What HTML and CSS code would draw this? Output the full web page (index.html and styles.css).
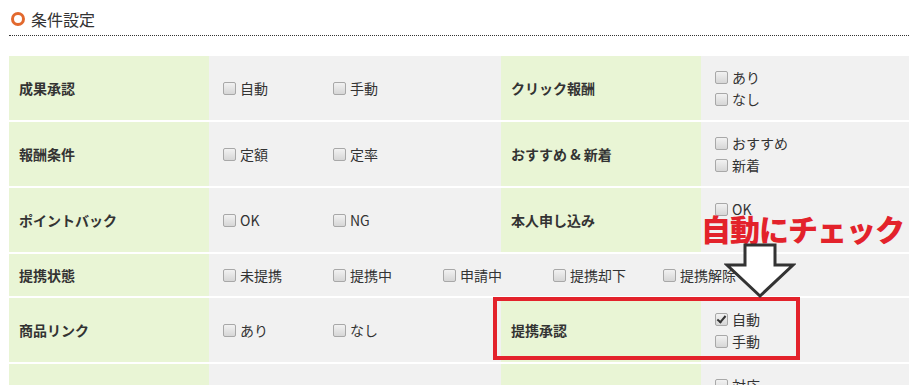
FILE: index.html
```html
<!doctype html>
<html lang="ja">

<head>
    <meta charset="UTF-8">
    <title>条件設定</title>
    <link rel="stylesheet" href="styles.css">
</head>

<body>
    <div class="wrap">
        <h2 class="title"><span class="ring"></span>条件設定</h2>

        <table class="cond">
            <colgroup>
                <col class="c-head">
                <col class="c-body">
                <col class="c-head">
                <col class="c-side">
            </colgroup>
            <tr>
                <th>成果承認</th>
                <td>
                    <div class="opts">
                        <label class="opt"><input type="checkbox">自動</label>
                        <label class="opt"><input type="checkbox">手動</label>
                    </div>
                </td>
                <th>クリック報酬</th>
                <td class="stack">
                    <label class="opt"><input type="checkbox">あり</label>
                    <label class="opt"><input type="checkbox">なし</label>
                </td>
            </tr>
            <tr>
                <th>報酬条件</th>
                <td>
                    <div class="opts">
                        <label class="opt"><input type="checkbox">定額</label>
                        <label class="opt"><input type="checkbox">定率</label>
                    </div>
                </td>
                <th>おすすめ &amp; 新着</th>
                <td class="stack">
                    <label class="opt"><input type="checkbox">おすすめ</label>
                    <label class="opt"><input type="checkbox">新着</label>
                </td>
            </tr>
            <tr>
                <th>ポイントバック</th>
                <td>
                    <div class="opts">
                        <label class="opt"><input type="checkbox">OK</label>
                        <label class="opt"><input type="checkbox">NG</label>
                    </div>
                </td>
                <th>本人申し込み</th>
                <td class="stack">
                    <label class="opt"><input type="checkbox">OK</label>
                    <div class="opt-gap"></div>
                </td>
            </tr>
            <tr>
                <th>提携状態</th>
                <td colspan="3">
                    <div class="opts">
                        <label class="opt"><input type="checkbox">未提携</label>
                        <label class="opt"><input type="checkbox">提携中</label>
                        <label class="opt"><input type="checkbox">申請中</label>
                        <label class="opt"><input type="checkbox">提携却下</label>
                        <label class="opt"><input type="checkbox">提携解除</label>
                    </div>
                </td>
            </tr>
            <tr>
                <th>商品リンク</th>
                <td>
                    <div class="opts">
                        <label class="opt"><input type="checkbox">あり</label>
                        <label class="opt"><input type="checkbox">なし</label>
                    </div>
                </td>
                <th>提携承認</th>
                <td class="stack">
                    <label class="opt"><input type="checkbox" checked>自動</label>
                    <label class="opt"><input type="checkbox">手動</label>
                </td>
            </tr>
            <tr>
                <th>スマホ対応</th>
                <td>
                    <div class="opts">
                        <label class="opt"><input type="checkbox">あり</label>
                        <label class="opt"><input type="checkbox">なし</label>
                    </div>
                </td>
                <th>自己アフィリエイト</th>
                <td class="stack">
                    <label class="opt"><input type="checkbox">対応</label>
                    <label class="opt"><input type="checkbox">非対応</label>
                </td>
            </tr>
        </table>

        <!-- 注釈 -->
        <div class="note-box"></div>
        <p class="note-text">自動にチェック</p>
        <svg class="note-arrow" width="72" height="58" viewBox="0 0 72 58">
            <polygon points="21,3 51,3 51,23 69,23 36,54 3,23 21,23" fill="#fff" stroke="#333" stroke-width="3" />
        </svg>
    </div>
</body>

</html>
```

FILE: styles.css
```css
body {
    margin: 0;
    background: #fff;
    color: #333;
    font-family: "Noto Sans CJK JP", sans-serif;
}

.wrap {
    position: relative;
    width: 900px;
    padding-left: 9px;
}

.title {
    display: flex;
    align-items: center;
    gap: 6px;
    margin: 0;
    padding: 9px 0 6px 2px;
    border-bottom: 1px dotted #333;
    font-size: 16px;
    font-weight: normal;
    line-height: 20px;
}

.ring {
    width: 14px;
    height: 14px;
    box-sizing: border-box;
    border: 3px solid #e2692e;
    border-radius: 50%;
}

.cond {
    width: 900px;
    margin-top: 20px;
    table-layout: fixed;
    border-collapse: collapse;
    font-size: 14px;
    line-height: 22px;
}

.c-head {
    width: 200px;
}

.c-body {
    width: 292px;
}

.c-side {
    width: 208px;
}

.cond th,
.cond td {
    padding: 10px 10px 10px 14px;
    border-bottom: 2px solid #fff;
    vertical-align: middle;
    text-align: left;
}

.cond th {
    padding-left: 10px;
    background: #e9f5d5;
    font-weight: bold;
}

.cond td {
    background: #f1f1f1;
    white-space: nowrap;
}

.opts {
    display: flex;
}

.opt {
    display: flex;
    align-items: center;
    gap: 4px;
    width: 110px;
}

.opt-gap {
    height: 22px;
}

.opt input {
    appearance: none;
    width: 13px;
    height: 13px;
    margin: 0;
    border: 1px solid #a8a8a8;
    border-radius: 2px;
    background: linear-gradient(#f2f2f2, #d6d6d6);
    position: relative;
}

.opt input:checked::after {
    content: "";
    position: absolute;
    left: 3px;
    top: 0;
    width: 3px;
    height: 7px;
    border: solid #333;
    border-width: 0 2px 2px 0;
    transform: rotate(40deg);
}

.note-box {
    position: absolute;
    left: 493px;
    top: 297px;
    width: 299px;
    height: 55px;
    border: 4px solid #e3222b;
}

.note-text {
    position: absolute;
    left: 701px;
    top: 208px;
    margin: 0;
    color: #e3222b;
    font-size: 30px;
    font-weight: 900;
    line-height: 40px;
    letter-spacing: -1px;
    white-space: nowrap;
}

.note-arrow {
    position: absolute;
    left: 724px;
    top: 242px;
}
```
